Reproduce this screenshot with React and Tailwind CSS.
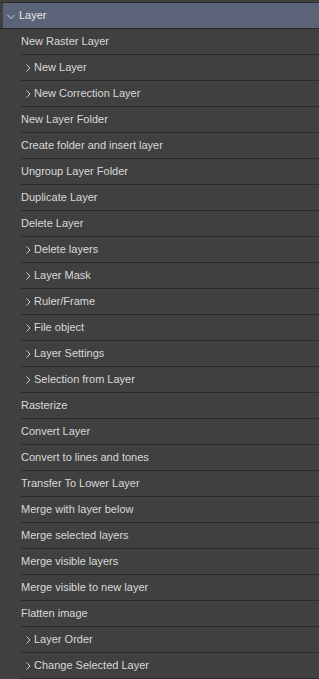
import React from 'react';

const items = [
  { label: 'New Raster Layer' },
  { label: 'New Layer', sub: true },
  { label: 'New Correction Layer', sub: true },
  { label: 'New Layer Folder' },
  { label: 'Create folder and insert layer' },
  { label: 'Ungroup Layer Folder' },
  { label: 'Duplicate Layer' },
  { label: 'Delete Layer' },
  { label: 'Delete layers', sub: true },
  { label: 'Layer Mask', sub: true },
  { label: 'Ruler/Frame', sub: true },
  { label: 'File object', sub: true },
  { label: 'Layer Settings', sub: true },
  { label: 'Selection from Layer', sub: true },
  { label: 'Rasterize' },
  { label: 'Convert Layer' },
  { label: 'Convert to lines and tones' },
  { label: 'Transfer To Lower Layer' },
  { label: 'Merge with layer below' },
  { label: 'Merge selected layers' },
  { label: 'Merge visible layers' },
  { label: 'Merge visible to new layer' },
  { label: 'Flatten image' },
  { label: 'Layer Order', sub: true },
  { label: 'Change Selected Layer', sub: true },
];

export default function App() {
  return (
    <div
      className="w-[319px] h-[679px] bg-[#404040] text-[#d9d9d9] text-[11px] overflow-hidden"
      style={{ fontFamily: '"Liberation Sans", Arial, sans-serif' }}
    >
      <div className="h-[2px]" />
      <div className="border-t border-b border-[#2a2a2a] pl-[3px]">
        <div className="h-[25px] bg-[#5a6378] flex items-center pl-[4px] text-[#e6e6e6]">
          <svg width="8" height="6" viewBox="0 0 8 6" className="mr-[4px] mt-[3px]">
            <path d="M0.5 1 L4 4.5 L7.5 1" stroke="#d0d4dc" strokeWidth="1" fill="none" />
          </svg>
          Layer
        </div>
      </div>
      <div className="pl-[21px]">
        {items.map((item, i) => (
          <div
            key={i}
            className="h-[26px] border-b border-[#2a2a2a] flex items-center"
          >
            {item.sub ? (
              <span className="flex items-center pl-[5px]">
                <svg width="5" height="8" viewBox="0 0 5 8" className="mr-[3px]">
                  <path d="M0.5 0.5 L4 4 L0.5 7.5" stroke="#d0d0d0" strokeWidth="1" fill="none" />
                </svg>
                {item.label}
              </span>
            ) : (
              item.label
            )}
          </div>
        ))}
      </div>
    </div>
  );
}
